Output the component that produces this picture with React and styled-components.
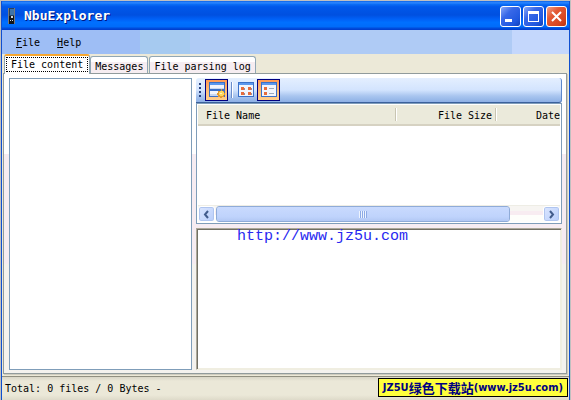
import React from "react";
import styled, { createGlobalStyle, css } from "styled-components";

const Global = createGlobalStyle`
  *, *::before, *::after { box-sizing: border-box; }
  body { margin: 0; background: #c0c0c0; }
  button, textarea { font: inherit; color: inherit; }
`;

const Frame = styled.div`
  position: relative;
  display: flex;
  flex-direction: column;
  min-height: 100vh;
  padding: 1px 1px 0;
  background: #c0c0c0;
  color: #000;
  font: 10px/14px "DejaVu Sans Mono", "Liberation Mono", monospace;
`;

const Shell = styled.main`
  flex: 1;
  display: flex;
  flex-direction: column;
  border: solid #0f4fd0;
  border-width: 0 1px;
  background: #ece9d8;
`;

const TitleBar = styled.header`
  display: flex;
  align-items: center;
  gap: 7px;
  height: 29px;
  padding: 1px 2px 0 6px;
  background: linear-gradient(#0a63e8 0, #2c86ff 6%, #0a6cf5 12%, #0058ea 20%, #0050e0 48%, #0060f6 62%, #0070ff 74%, #006cfa 88%, #0040d0 97%);
`;

const Title = styled.h1`
  flex: 1;
  margin: 0;
  color: #fff;
  font: bold 13px/18px "DejaVu Sans Mono", "Liberation Mono", monospace;
  text-shadow: 1px 1px #001580;
`;

const Controls = styled.div`
  display: flex;
  gap: 2px;
`;

const Control = styled.button`
  width: 21px;
  height: 21px;
  padding: 0;
  border: 1px solid #fff;
  border-radius: 3px;
  background: ${(p) =>
    p.$close
      ? "linear-gradient(135deg, #f0a088, #e35a35 35%, #d84520 75%, #b83410)"
      : "linear-gradient(135deg, #88a8f8, #3868e8 35%, #2058e0 75%, #1040b8)"};
  svg { display: block; }
`;

const MenuBar = styled.nav`
  display: flex;
  align-items: center;
  height: 24px;
  padding: 0 6px;
  background: linear-gradient(90deg, #9ebef5 138px, #a6caf0 138px 188px, #afcbf5 188px calc(100% - 57px), #c4d7fc calc(100% - 57px));
`;

const MenuItem = styled.button`
  padding: 1px 8px 0;
  border: 0;
  background: none;
  & + & { margin-left: 1px; }
`;

const Tabs = styled.div`
  display: flex;
  align-items: flex-end;
  height: 19px;
  padding-left: 2px;
`;

const Tab = styled.button`
  height: 17px;
  margin-right: 1px;
  padding: 2px 4px 0;
  border: 1px solid #91a7b4;
  border-bottom: 0;
  border-radius: 3px 3px 0 0;
  background: linear-gradient(#fff 5px, #f6edf1 5px);
  white-space: nowrap;
  line-height: 13px;
  ${(p) =>
    p.$active &&
    css`
      position: relative;
      z-index: 1;
      height: 20px;
      margin: 0 0 -1px;
      padding: 0 1px 1px;
      border-top: 2px solid #f8a830;
      background: #fff;
      span {
        display: block;
        padding: 0 4px;
        border: 1px dotted #000;
      }
    `}
`;

const Page = styled.section`
  flex: 1;
  display: grid;
  grid-template-columns: minmax(0, 1fr) minmax(0, 2fr);
  gap: 4px;
  margin: 0 2px 2px 1px;
  padding: 4px 4px 3px 5px;
  border: 1px solid #919b9c;
  background: linear-gradient(#fff 80px, #f6ecf2 80px 190px, #f4f2ee 190px);
  box-shadow: 1px 1px #cfccbe;
`;

const Tree = styled.aside`
  border: 1px solid #7f9db9;
  background: #fff;
`;

const Side = styled.div`
  display: flex;
  flex-direction: column;
  min-width: 0;
`;

const ToolBar = styled.div`
  display: flex;
  align-items: center;
  height: 25px;
  padding: 0 3px;
  border-bottom: 1px solid #3b619c;
  border-right: 1px solid #5c87cb;
  border-radius: 3px 3px 3px 0;
  background: linear-gradient(#e4efff, #d3e4fe 50%, #a9c5ef 75%, #8eb0e5);
`;

const Grip = styled.span`
  width: 2px;
  height: 14px;
  margin-right: 4px;
  background: repeating-linear-gradient(#27417f 0 2px, transparent 2px 4px);
`;

const Divider = styled.span`
  width: 2px;
  height: 16px;
  margin: 0 1px 0 3px;
  border-left: 1px solid #6a8ccb;
  border-right: 1px solid #fff;
`;

const Tool = styled.button`
  display: grid;
  place-items: center;
  width: 23px;
  height: 22px;
  padding: 0;
  border: 1px solid ${(p) => (p.$pressed ? "#000080" : "transparent")};
  background: ${(p) => (p.$pressed ? "linear-gradient(#fe9a55, #ffc078 60%, #ffce8c)" : "none")};
`;

const FileList = styled.div`
  display: flex;
  flex-direction: column;
  height: 121px;
  padding: 1px;
  border: 1px solid #7f9db9;
  background: #fff;
`;

const TableView = styled.div`
  flex: 1;
  overflow: hidden;
`;

const Table = styled.table`
  width: 100%;
  table-layout: fixed;
  border-collapse: collapse;
`;

const Heading = styled.th`
  width: ${(p) => p.$width};
  height: 20px;
  padding: 2px 5px 0 8px;
  border-bottom: 2px solid #d6d2c2;
  background:
    linear-gradient(#c8c5b2, #c8c5b2) calc(100% - 1px) 3px / 1px 13px no-repeat,
    linear-gradient(#fff, #fff) 100% 3px / 1px 13px no-repeat,
    #ebeadb;
  font-weight: normal;
  text-align: ${(p) => p.$align || "left"};
  white-space: nowrap;
`;

const LastHeading = styled(Heading)`
  padding: 2px 0 0;
  background: #ebeadb;
`;

const ScrollBar = styled.div`
  display: flex;
  height: 17px;
  border-top: 1px solid #eeede5;
  background: linear-gradient(#f7f5f2 5px, #f8ecf1 5px 9px, #fefefb 9px);
`;

const ScrollButton = styled.button`
  display: grid;
  place-items: center;
  width: 17px;
  padding: 0;
  border: 1px solid #fff;
  border-radius: 3px;
  background: linear-gradient(135deg, #dbe6ff, #b9cefb);
  box-shadow: inset 0 0 0 1px #b0c5ef;
`;

const Track = styled.div`
  flex: 1;
  padding: 0 9% 0 1px;
`;

const Thumb = styled.div`
  display: grid;
  place-items: center;
  height: 16px;
  border: 1px solid #fff;
  border-radius: 3px;
  outline: 1px solid #8fabd8;
  outline-offset: -1px;
  background: linear-gradient(#c9dafe, #bfd3fc 70%, #b2c8f4);
`;

const Ridges = styled.span`
  width: 8px;
  height: 7px;
  background: repeating-linear-gradient(90deg, #eef4fe 0 1px, #8caae6 1px 2px);
`;

const PreviewPane = styled.div`
  position: relative;
  flex: 1;
  display: flex;
  margin-top: 4px;
`;

const Preview = styled.textarea`
  width: 100%;
  min-height: 100px;
  padding: 3px;
  border: 1px solid;
  border-color: #aca899 #f0eee1 #f0eee1 #aca899;
  box-shadow: inset 1px 1px #716f64, inset -1px -1px #f0eee1;
  background: #fff;
  resize: none;
  outline: 0;
`;

const SiteMark = styled.a`
  position: absolute;
  left: 41px;
  top: 0;
  color: #2828f0;
  font: 15px/17px "Liberation Mono", monospace;
  text-decoration: none;
`;

const StatusBar = styled.footer`
  height: 24px;
  padding: 5px 3px 0;
  border-top: 1px solid #918f80;
  background: linear-gradient(#d9d6c7, #ebe8d8 4px, #ebe8d8 18px, #dedac9);
`;

const Badge = styled.a`
  position: absolute;
  right: 3px;
  bottom: 3px;
  display: flex;
  height: 19px;
  padding: 0 4px;
  border: 1px solid #000;
  background: #ffff3c;
  color: #000080;
  font: bold 11px/17px "DejaVu Sans Condensed", "DejaVu Sans", sans-serif;
  text-decoration: none;
  white-space: nowrap;
`;

const BadgeName = styled.span`
  font-family: "Noto Sans CJK SC", sans-serif;
  font-size: 13px;
`;

function PhoneIcon() {
  return (
    <svg width="9" height="17" viewBox="0 0 9 17" aria-hidden="true">
      <path fill="#77797c" d="M0 0h7v16H0z" />
      <path fill="#28415c" d="M1 0h5v8H1z" />
      <path fill="#3f74a9" d="M2 1h4v6H2z" />
      <path fill="#101418" d="M1 8h5v8H1z" />
      <path fill="#d4dde4" d="M3 8h2v2H3zM2 12h1v1H2zM4 12h1v1H4z" />
    </svg>
  );
}

function WindowShape({ children }) {
  return (
    <svg width="16" height="16" viewBox="0 0 16 16" aria-hidden="true">
      <path fill="#3a70c8" d="M0 0h16v15H0z" />
      <path fill="#5b98ed" d="M1 1h14v2H1z" />
      <path fill="#f2f5fc" d="M1 3h14v11H1z" />
      {children}
    </svg>
  );
}

function NewViewIcon() {
  return (
    <WindowShape>
      <path fill="#3a70c8" d="M1 7h14v2H1z" />
      <path fill="#c8d8ef" d="M1 6h14v1H1zM1 12h9v2H1z" />
      <path fill="#e59a2c" d="M12 7h1v2h2v2h1v2h-1v2h-2v1h-2v-1H9v-2H8v-2h1V9h3z" />
      <path fill="#ffd75e" d="M11 9h3v5h-3zM10 10h5v3h-5z" />
      <path fill="#fff6b8" d="M11 11h2v1h-2z" />
    </WindowShape>
  );
}

function TilesIcon() {
  return (
    <WindowShape>
      <path fill="#e76c3b" d="M3 5h3v3H3zM10 5h3v3h-3zM3 10h3v3H3zM10 10h3v3h-3z" />
      <path fill="#9a8c98" d="M6 6h1v2H6zM13 6h1v2h-1zM6 11h1v2H6zM13 11h1v2h-1z" />
    </WindowShape>
  );
}

function ListIcon() {
  return (
    <WindowShape>
      <path fill="#e76c3b" d="M3 5h3v3H3zM3 10h3v3H3z" />
      <path fill="#9ca9bd" d="M8 6h5v1H8zM8 11h5v1H8z" />
    </WindowShape>
  );
}

function Arrow({ d }) {
  return (
    <svg width="9" height="9" viewBox="0 0 9 9" aria-hidden="true">
      <path fill="none" stroke="#425c8c" strokeWidth="2" d={d} />
    </svg>
  );
}

export default function App() {
  return (
    <Frame>
      <Global />
      <Shell>
        <TitleBar>
          <PhoneIcon />
          <Title>NbuExplorer</Title>
          <Controls>
            <Control aria-label="Minimize">
              <svg width="19" height="19"><path fill="#fff" d="M4 12h7v3H4z" /></svg>
            </Control>
            <Control aria-label="Maximize">
              <svg width="19" height="19"><path fill="#fff" fillRule="evenodd" d="M4 4h11v11H4zM5 7v7h9V7z" /></svg>
            </Control>
            <Control $close aria-label="Close">
              <svg width="19" height="19"><path stroke="#fff" strokeWidth="2" d="M5 5l9 9M14 5l-9 9" /></svg>
            </Control>
          </Controls>
        </TitleBar>
        <MenuBar>
          <MenuItem><u>F</u>ile</MenuItem>
          <MenuItem><u>H</u>elp</MenuItem>
        </MenuBar>
        <Tabs role="tablist">
          <Tab role="tab" aria-selected="true" $active><span>File content</span></Tab>
          <Tab role="tab" aria-selected="false">Messages</Tab>
          <Tab role="tab" aria-selected="false">File parsing log</Tab>
        </Tabs>
        <Page>
          <Tree aria-label="Folders" />
          <Side>
            <ToolBar role="toolbar">
              <Grip />
              <Tool $pressed aria-label="Preview pane"><NewViewIcon /></Tool>
              <Divider />
              <Tool aria-label="Large icons"><TilesIcon /></Tool>
              <Tool $pressed aria-label="Details"><ListIcon /></Tool>
            </ToolBar>
            <FileList>
              <TableView>
                <Table>
                  <thead>
                    <tr>
                      <Heading $width="55%">File Name</Heading>
                      <Heading $width="100px" $align="right">File Size</Heading>
                      <LastHeading $align="right">Date</LastHeading>
                    </tr>
                  </thead>
                </Table>
              </TableView>
              <ScrollBar>
                <ScrollButton aria-label="Scroll left"><Arrow d="M6 1L3 4.500L6 8" /></ScrollButton>
                <Track><Thumb><Ridges /></Thumb></Track>
                <ScrollButton aria-label="Scroll right"><Arrow d="M3 1L6 4.500L3 8" /></ScrollButton>
              </ScrollBar>
            </FileList>
            <PreviewPane>
              <Preview aria-label="File preview" readOnly />
              <SiteMark href="http://www.jz5u.com">http://www.jz5u.com</SiteMark>
            </PreviewPane>
          </Side>
        </Page>
        <StatusBar>Total: 0 files / 0 Bytes -</StatusBar>
      </Shell>
      <Badge href="http://www.jz5u.com">JZ5U<BadgeName>绿色下载站</BadgeName>(www.jz5u.com)</Badge>
    </Frame>
  );
}
